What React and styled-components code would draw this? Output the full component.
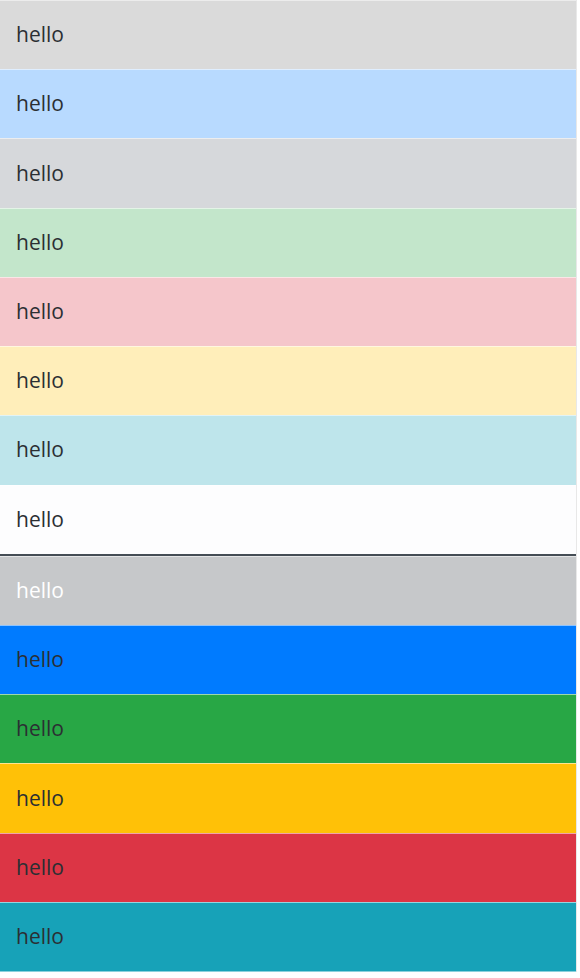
import styled, { createGlobalStyle } from "styled-components";

const GlobalStyle = createGlobalStyle`
    body {
        margin: 0;
        background: #fff;
        font-family: "Open Sans", "Noto Sans", sans-serif;
    }
`

const List = styled.ul`
    list-style: none;
    margin: 0;
    padding: 0;
    width: 577px;
    height: 972px;
    display: flex;
    flex-direction: column;
    border-right: 1px solid #e8e8e8;
    box-sizing: border-box;
`

const Row = styled.li`
    flex: 1;
    display: flex;
    align-items: center;
    padding: 0 16px 2px;
    font-size: 21px;
    color: ${p => p.$light ? "#fff" : "#2b2f33"};
    background: ${p => p.$bg};
    border-top: 1px solid rgba(255, 255, 255, 0.55);
    border-bottom: ${p => p.$divider ? "2px solid #454d55" : "none"};
    &:first-child {
        border-top-color: #ececec;
    }
    &:last-child {
        border-bottom: 1px solid rgba(255, 255, 255, 0.5);
    }
`

const rows = [
    { bg: "#dadada" },
    { bg: "#b8daff" },
    { bg: "#d6d8db" },
    { bg: "#c3e6cb" },
    { bg: "#f5c6cb" },
    { bg: "#ffeeba" },
    { bg: "#bee5eb" },
    { bg: "#fdfdfe", divider: true },
    { bg: "#c6c8ca", light: true },
    { bg: "#007bff" },
    { bg: "#28a745" },
    { bg: "#ffc107" },
    { bg: "#dc3545" },
    { bg: "#17a2b8" },
]

export default function App() {
    return (
        <>
            <GlobalStyle />
            <List>
                {rows.map((row, i) => (
                    <Row key={i} $bg={row.bg} $light={row.light} $divider={row.divider}>
                        hello
                    </Row>
                ))}
            </List>
        </>
    )
}
